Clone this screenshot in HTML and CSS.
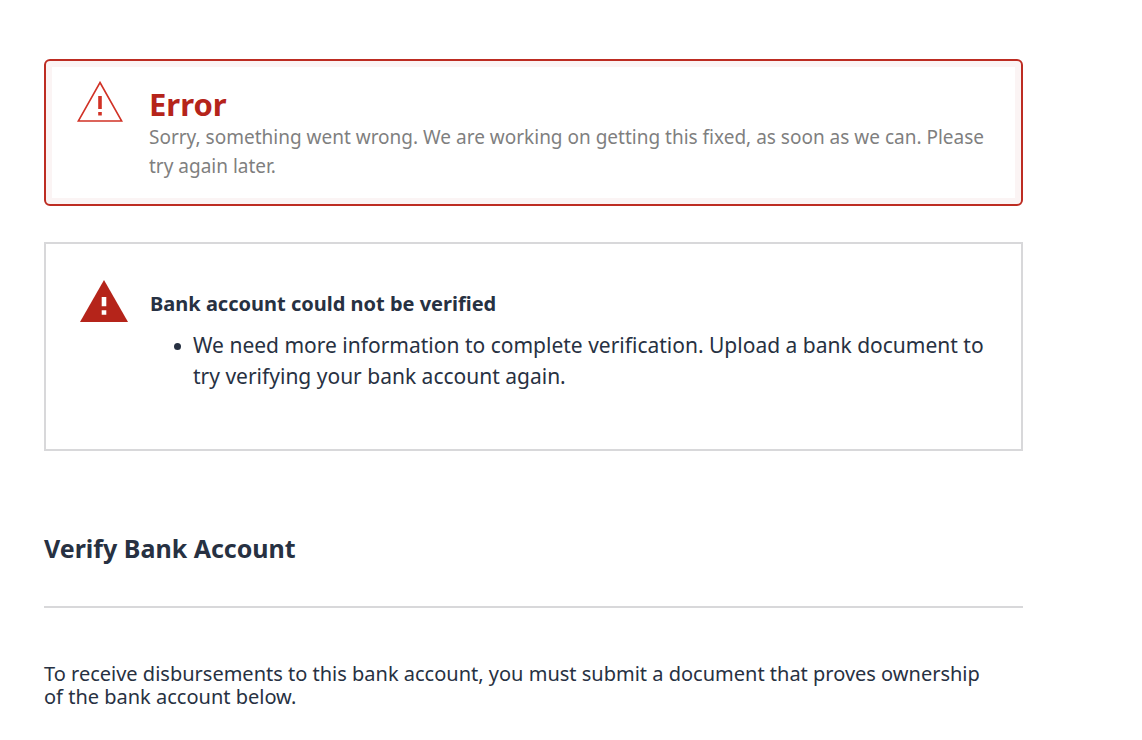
FILE: index.html
```html
<!DOCTYPE html>
<html lang="en">

<head>
    <meta charset="UTF-8">
    <meta name="viewport" content="width=device-width, initial-scale=1.0">
    <title>Verify Bank Account</title>
    <link rel="stylesheet" href="styles.css">
</head>

<body>
    <main class="page">
        <section class="alert" role="alert">
            <svg class="alert-icon" viewBox="0 0 46 42" aria-hidden="true">
                <path d="M23 1.5 L44.7 40 H1.3 Z" fill="none" stroke="#d13226" stroke-width="1.6" />
                <path d="M21.2 15 h3.6 v13 h-3.6 z M21.2 31 h3.6 v3.4 h-3.6 z" fill="#d13226" />
            </svg>
            <div class="alert-body">
                <h2 class="alert-title">Error</h2>
                <p class="alert-text">Sorry, something went wrong. We are working on getting this fixed, as soon as we can. Please try again later.</p>
            </div>
        </section>

        <section class="notice">
            <svg class="notice-icon" viewBox="0 0 48 42" aria-hidden="true">
                <path d="M24 0 L48 42 H0 Z" fill="#b5241a" />
                <path d="M21.7 17 h4.6 v9.3 h-4.6 z M21.7 30.3 h4.6 v4.4 h-4.6 z" fill="#fff" />
            </svg>
            <div class="notice-body">
                <h3 class="notice-title">Bank account could not be verified</h3>
                <ul class="notice-list">
                    <li>We need more information to complete verification. Upload a bank document to try verifying your bank account again.</li>
                </ul>
            </div>
        </section>

        <h1 class="heading">Verify Bank Account</h1>
        <p class="intro">To receive disbursements to this bank account, you must submit a document that proves ownership of the bank account below.</p>
    </main>
</body>

</html>
```
FILE: styles.css
```css
* {
    box-sizing: border-box;
}

body {
    margin: 0;
    background: #fff;
    color: #273142;
    font-family: "Noto Sans", "Open Sans", sans-serif;
}

h1, h2, h3, p, ul {
    margin: 0;
}

.page {
    margin: 59px 119px 0 44px;
}

/* error box */
.alert {
    display: flex;
    gap: 26px;
    padding: 20px 31px 23px;
    border: 2px solid #bd2c22;
    border-radius: 6px;
    box-shadow: inset 0 0 0 6px #fbf4f4;
}

.alert-icon {
    flex: none;
    width: 46px;
    height: 42px;
}

.alert-title {
    padding-top: 4px;
    color: #b5241a;
    font-size: 31px;
    line-height: 38px;
}

.alert-text {
    color: #7f7f7f;
    font-size: 19px;
    line-height: 29px;
}

/* verification notice */
.notice {
    display: flex;
    gap: 22px;
    margin-top: 36px;
    padding: 36px 34px 57px;
    border: 2px solid #d8d8da;
}

.notice-icon {
    flex: none;
    width: 48px;
    height: 42px;
}

.notice-title {
    padding-top: 8px;
    font-size: 20px;
    line-height: 32px;
}

.notice-list {
    margin-top: 10px;
    padding-left: 24px;
    font-size: 21px;
    line-height: 31px;
    list-style: none;
}

.notice-list li {
    display: flex;
    gap: 12px;
}

.notice-list li::before {
    content: "";
    flex: none;
    width: 7px;
    height: 7px;
    margin-top: 13px;
    border-radius: 50%;
    background: #273142;
}

/* page heading */
.heading {
    margin-top: 79px;
    padding-bottom: 40px;
    border-bottom: 2px solid #d8d8da;
    font-size: 25px;
    line-height: 36px;
}

.intro {
    margin-top: 54px;
    padding-right: 24px;
    font-size: 20px;
    line-height: 23px;
}
```
